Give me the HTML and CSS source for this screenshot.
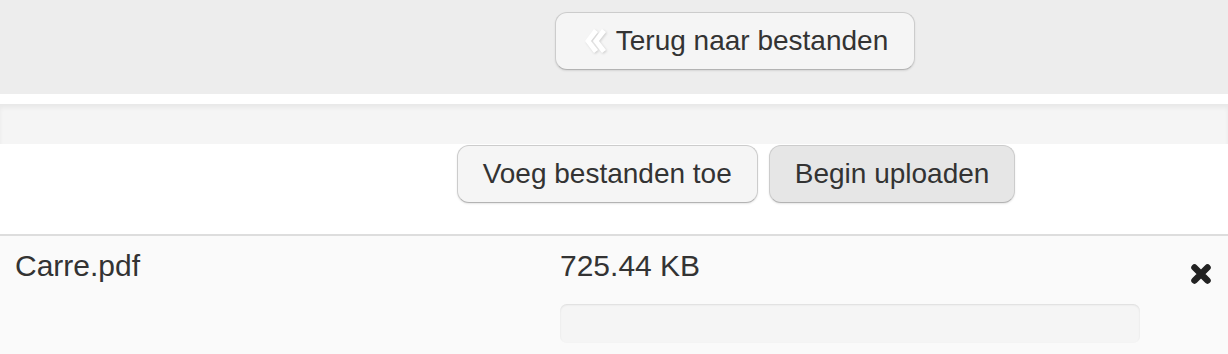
FILE: index.html
```html
<!DOCTYPE html>
<html lang="nl">
  <head>
    <meta charset="UTF-8" />
    <meta name="viewport" content="width=device-width, initial-scale=1.0" />
    <title>Bestanden uploaden</title>
    <link rel="stylesheet" href="styles.css">
  </head>
  <body>
    <div class="topbar">
      <button class="btn btn--back">
        <svg class="btn__icon" width="22" height="26" viewBox="0 0 22 26">
          <polygon points="10,1 14,4 7,13 14,22 10,25 1,13" />
          <polygon points="18,1 22,4 15,13 22,22 18,25 9,13" />
        </svg>
        Terug naar bestanden
      </button>
    </div>

    <div class="spacer"></div>
    <div class="well"></div>

    <div class="actions">
      <button class="btn">Voeg bestanden toe</button>
      <button class="btn btn--active">Begin uploaden</button>
    </div>

    <div class="files">
      <div class="file">
        <div class="file__name">Carre.pdf</div>
        <div class="file__info">
          <div class="file__size">725.44 KB</div>
          <div class="progress"><div class="progress__bar" style="width:0%"></div></div>
        </div>
        <div class="file__remove">
          <svg width="22" height="22" viewBox="0 0 22 22">
            <path d="M4.5 4.5 L17.5 17.5 M17.5 4.5 L4.5 17.5" stroke="#222" stroke-width="6.5" stroke-linecap="round" />
          </svg>
        </div>
      </div>
    </div>
  </body>
</html>
```

FILE: styles.css
```css
*{margin:0;padding:0;box-sizing:border-box;}
body{background:#fff;font-family:"Liberation Sans",Arial,sans-serif;color:#333;}
.btn{display:inline-flex;align-items:center;height:58px;padding:0 25px;font-family:inherit;font-size:28px;color:#333;background:#f5f5f5;border:1px solid #ccc;border-bottom-color:#b3b3b3;border-radius:12px;box-shadow:0 1px 2px rgba(0,0,0,.1);cursor:pointer;}
.btn--active{background:#e6e6e6;}
.btn--back{padding:0 26px 0 28px;}
.btn__icon{fill:#fff;margin-right:10px;filter:drop-shadow(1px 1px 1px rgba(0,0,0,.15));}
.topbar{height:94px;background:#ededed;display:flex;justify-content:center;padding-left:242px;padding-top:12px;}
.spacer{height:10px;background:#fff;}
.well{height:40px;background:#f5f5f5;box-shadow:inset 0 4px 4px rgba(0,0,0,.05);}
.actions{height:90px;display:flex;justify-content:center;gap:11px;padding-left:244px;padding-top:1px;}
.files{border-top:2px solid #ddd;background:#fafafa;height:120px;}
.file{display:grid;grid-template-columns:545px 580px 1fr;padding:10px 0 0 15px;}
.file__name,.file__size{font-size:30px;line-height:40px;}
.progress{margin-top:18px;height:39px;background:#f5f5f5;border-radius:7px;box-shadow:inset 0 1px 2px rgba(0,0,0,.1);overflow:hidden;}
.progress__bar{height:100%;background:#0e90d2;}
.file__remove{padding:17px 0 0 50px;}
```
